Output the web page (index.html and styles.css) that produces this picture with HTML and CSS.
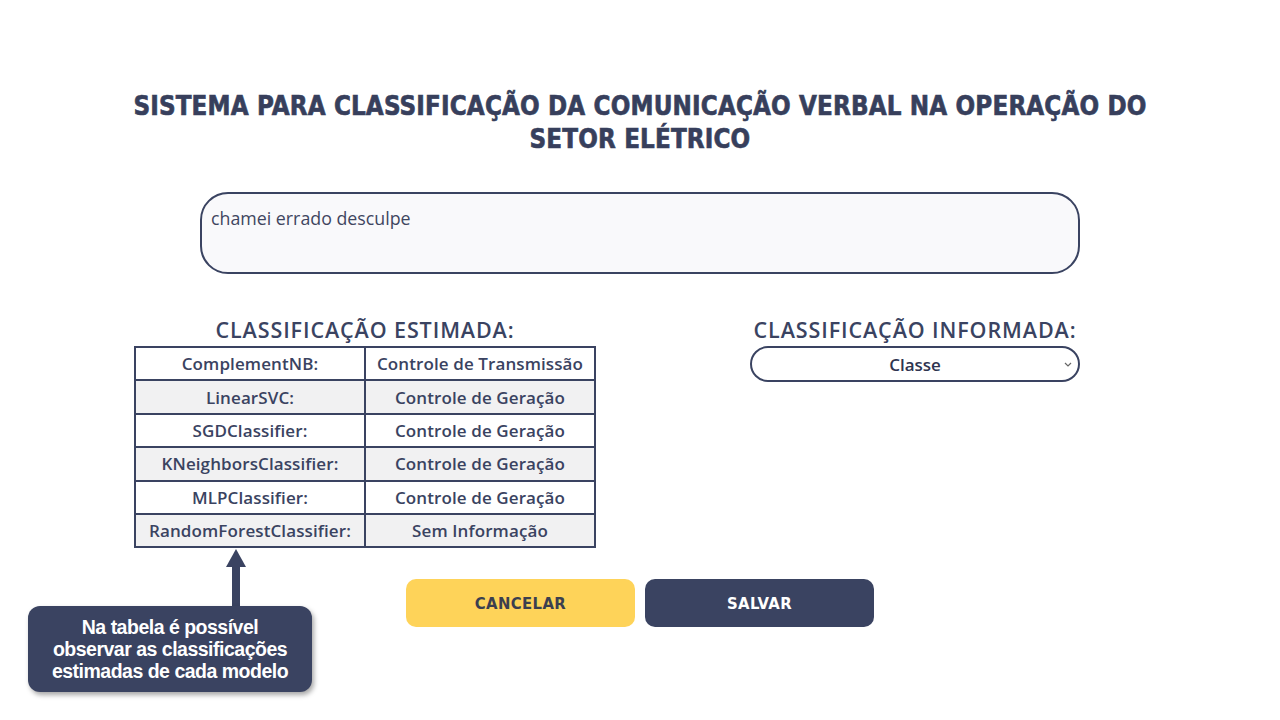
FILE: index.html
```html
<!DOCTYPE html>
<html lang="pt">
<head>
<meta charset="utf-8">
<title>Sistema de Classificação</title>
<link rel="stylesheet" href="styles.css">
</head>
<body>
<main class="page">
  <h1 class="title">SISTEMA PARA CLASSIFICAÇÃO DA COMUNICAÇÃO VERBAL NA OPERAÇÃO DO<br>SETOR ELÉTRICO</h1>

  <div class="input-wrap">
    <div class="textbox">chamei errado desculpe</div>
  </div>

  <section class="results">
    <div class="col-left">
      <h2 class="heading">CLASSIFICAÇÃO ESTIMADA:</h2>
      <table class="models">
        <tr><td>ComplementNB:</td><td>Controle de Transmissão</td></tr>
        <tr class="alt"><td>LinearSVC:</td><td>Controle de Geração</td></tr>
        <tr><td>SGDClassifier:</td><td>Controle de Geração</td></tr>
        <tr class="alt"><td>KNeighborsClassifier:</td><td>Controle de Geração</td></tr>
        <tr><td>MLPClassifier:</td><td>Controle de Geração</td></tr>
        <tr class="alt"><td>RandomForestClassifier:</td><td>Sem Informação</td></tr>
      </table>
    </div>
    <div class="col-right">
      <h2 class="heading">CLASSIFICAÇÃO INFORMADA:</h2>
      <div class="select">
        <span>Classe</span>
        <svg class="chev" width="8" height="5" viewBox="0 0 8 5"><path d="M1 1 L4 4 L7 1" fill="none" stroke="#666" stroke-width="1.2"/></svg>
      </div>
    </div>
  </section>

  <div class="actions">
    <button class="btn btn-cancel">CANCELAR</button>
    <button class="btn btn-save">SALVAR</button>
  </div>

  <div class="annotation">
    <svg class="arrow" width="24" height="60" viewBox="0 0 24 60">
      <polygon points="12,0 22,18 2,18" fill="#3a4361"/>
      <rect x="8" y="17" width="8" height="43" fill="#3a4361"/>
    </svg>
    <div class="callout">Na tabela é possível<br>observar as classificações<br>estimadas de cada modelo</div>
  </div>
</main>
</body>
</html>
```
FILE: styles.css
```css
* { box-sizing: border-box; }
html, body { margin: 0; padding: 0; background: #fff; }
body { width: 1280px; height: 720px; overflow: hidden; font-family: "Open Sans", "DejaVu Sans", sans-serif; color: #3a4361; }
.page { position: relative; width: 1280px; height: 720px; padding-top: 90px; }

.title {
  margin: 0;
  text-align: center;
  font-family: "DejaVu Sans Condensed", "DejaVu Sans", sans-serif;
  font-weight: 800;
  font-size: 25.7px;
  line-height: 33px;
  letter-spacing: 0.15px;
  color: #373f5c;
  -webkit-text-stroke: 0.6px #373f5c;
}

.input-wrap { padding: 36px 200px 0 200px; }
.textbox {
  height: 82px;
  border: 2px solid #3a4361;
  border-radius: 28px;
  background: #f9f9fb;
  padding: 12px 9px;
  font-size: 17.8px;
  color: #3f4660;
}

.results { display: flex; padding: 42px 0 0 134px; }
.col-left { width: 462px; }
.col-right { width: 330px; margin-left: 154px; }

.heading {
  margin: 0 0 3px;
  text-align: center;
  font-size: 21.5px;
  font-weight: 600;
  line-height: 27px;
  letter-spacing: 0.9px;
  color: #3a4361;
}

.models { border-collapse: collapse; width: 462px; }
.models td {
  border: 2px solid #3a4361;
  height: 33.4px;
  padding: 0 4px;
  text-align: center;
  font-size: 17px;
  font-weight: 600;
  letter-spacing: 0.1px;
  color: #3a4361;
}
.models td:first-child { width: 230px; }
.models tr.alt td { background: #f1f1f2; }

.select {
  position: relative;
  height: 36px;
  border: 2px solid #3a4361;
  border-radius: 18px;
  display: flex;
  align-items: center;
  justify-content: center;
  font-size: 17px;
  font-weight: 600;
  color: #2e3450;
}
.chev { position: absolute; right: 6px; top: 14px; }

.actions { display: flex; justify-content: center; gap: 10px; padding-top: 31px; }
.btn {
  width: 229px;
  height: 48px;
  border: none;
  border-radius: 10px;
  font-family: "DejaVu Sans Condensed", "DejaVu Sans", sans-serif;
  font-weight: 700;
  font-size: 16.5px;
  letter-spacing: 0.4px;
}
.btn-cancel { background: #fed359; color: #3b3f4f; }
.btn-save { background: #3a4361; color: #fff; }

.annotation { position: absolute; left: 28px; top: 549px; width: 284px; }
.arrow { position: absolute; left: 196px; top: 0; }
.callout {
  position: absolute;
  left: 0;
  top: 57px;
  width: 284px;
  height: 86px;
  border-radius: 12px;
  background: #3a4361;
  box-shadow: 2px 3px 5px rgba(0,0,0,0.35);
  color: #fff;
  font-family: "Liberation Sans", Arial, sans-serif;
  font-weight: 700;
  font-size: 19.5px;
  line-height: 22px;
  letter-spacing: -0.5px;
  text-align: center;
  padding-top: 10px;
}
```
